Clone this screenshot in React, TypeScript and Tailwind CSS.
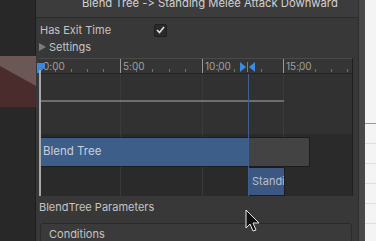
import React from "react";

const ticks = [56, 72, 88, 104, 137, 153, 170, 186, 219, 235, 262, 300, 316, 332, 348];

function Scene() {
  // little bit of scene view peeking out on the left
  return (
    <div className="w-[36px] h-full bg-[#282828] border-r border-[#1e1e1e] shrink-0">
      <svg width="36" height="241" viewBox="0 0 36 241">
        <rect x="0" y="56" width="36" height="51" fill="#4b2c2c" />
        <polygon points="0,56 36,56 36,86 0,66" fill="#6b5755" />
      </svg>
    </div>
  );
}

function Ruler() {
  return (
    <div className="relative h-[16px] bg-[#353535] border-t border-[#4a4a4a] border-b border-b-[#232323]">
      {ticks.map((t) => (
        <div key={t} className="absolute bottom-[1px] w-px h-[3px] bg-[#6f6f6f]" style={{ left: t - 40 }} />
      ))}
      <span className="absolute left-[4px] top-[1px] text-[10px] leading-[12px] text-[#a0a0a0]">0:00</span>
      {[
        { x: 81, l: "5:00" },
        { x: 163, l: "10:00" },
        { x: 244, l: "15:00" },
      ].map((m) => (
        <div key={m.l} className="absolute top-0 flex items-start" style={{ left: m.x }}>
          <div className="w-px h-[14px] bg-[#9a9a9a]" />
          <span className="ml-[2px] mt-[1px] text-[10px] leading-[12px] text-[#a0a0a0]">{m.l}</span>
        </div>
      ))}
      {/* transition in/out markers */}
      <svg className="absolute left-[201px] top-[3px]" width="15" height="10" viewBox="0 0 15 10">
        <polygon points="0,0 6,5 0,10" fill="#3c8be0" />
        <rect x="7" y="0" width="1" height="10" fill="#3c8be0" />
        <polygon points="15,0 9,5 15,10" fill="#3c8be0" />
      </svg>
      <svg className="absolute left-[-2px] top-[4px]" width="9" height="10" viewBox="0 0 9 10">
        <polygon points="0,0 8,0 8,4 2,10 0,10" fill="#3a86e0" />
      </svg>
    </div>
  );
}

function Timeline() {
  return (
    <div className="relative mt-[2px] w-[314px] border-r border-[#1f1f1f]">
      <Ruler />
      <div className="relative h-[122px]">
        <div className="h-[61px] bg-[#313131] border-b border-[#2a2a2a]" />
        <div className="h-[61px] bg-[#2a2a2a]" />
        {/* grid */}
        <div className="absolute top-0 bottom-0 left-[81px] w-px bg-[#3a3a3a]" />
        <div className="absolute top-0 bottom-0 left-[163px] w-px bg-[#3a3a3a]" />
        <div className="absolute top-0 bottom-0 left-[244px] w-px bg-[#3a3a3a]" />
        <div className="absolute top-[26px] left-0 w-[245px] h-[2px] bg-[#6e6e6e]" />
        {/* blend tree clip */}
        <div className="absolute top-[63px] left-0 w-[271px] h-[30px] flex border border-[#1c1c1c] border-l-0">
          <div className="w-[209px] h-full bg-[#3e5e8a] flex items-center pl-[4px] text-[11.5px] text-[#c9cfd8]">
            Blend Tree
          </div>
          <div className="flex-1 h-full bg-[#434343]" />
        </div>
        {/* standing clip */}
        <div className="absolute top-[93px] left-[209px] w-[37px] h-[29px] bg-[#3c5882] border border-[#1c1c1c] overflow-hidden flex items-center pl-[3px] text-[11px] text-[#b8bfca] whitespace-nowrap">
          Standi
        </div>
        <div className="absolute top-0 bottom-0 left-[209px] w-px bg-[#3f5f8c]" />
        {/* playhead */}
        <div className="absolute top-[-4px] bottom-0 left-0 w-[2px] bg-[#a8a8a8]" />
      </div>
    </div>
  );
}

function Cursor() {
  return (
    <svg className="absolute left-[245px] top-[209px]" width="18" height="25" viewBox="0 0 18 25">
      <path d="M1 1 L1 19 L5 15 L8 22 L11 21 L8 14 L14 14 Z" fill="#111" stroke="#e8e8e8" strokeWidth="1" />
    </svg>
  );
}

export default function App() {
  return (
    <div
      className="relative w-[376px] h-[241px] overflow-hidden flex bg-[#383838] text-[#c4c4c4] [font-feature-settings:'calt'_0,'liga'_0]"
      style={{ fontFamily: "Inter, 'Noto Sans', sans-serif" }}
    >
      <Scene />
      <div className="w-[322px] h-full bg-[#383838] shrink-0 overflow-hidden">
        <div className="h-[18px] bg-[#3c3c3c] border-b border-[#2b2b2b] pl-[46px] overflow-hidden">
          <div className="-mt-[5px] text-[11.25px] leading-[16px] text-[#d2d2d2] whitespace-nowrap">
            Blend Tree -&gt; Standing Melee Attack Downward
          </div>
        </div>
        <div className="pl-[3px] pt-[4px]">
          <div className="flex items-center h-[16px] text-[11px]">
            <span className="pl-[1px] w-[115px]">Has Exit Time</span>
            <div className="w-[13px] h-[13px] rounded-[2px] bg-[#2a2a2a] border border-[#1f1f1f] flex items-center justify-center">
              <svg width="9" height="8" viewBox="0 0 9 8">
                <path d="M1 4 L3.5 6.5 L8 1" fill="none" stroke="#e0e0e0" strokeWidth="1.6" />
              </svg>
            </div>
          </div>
          <div className="flex items-center h-[18px] text-[11px]">
            <svg className="mr-[3px]" width="7" height="8" viewBox="0 0 7 8">
              <polygon points="0,0 7,4 0,8" fill="#7c7c7c" />
            </svg>
            <span>Settings</span>
          </div>
          <Timeline />
          <div className="mt-[4px] h-[14px] text-[11px] leading-[14px]">BlendTree Parameters</div>
          <div className="mt-[9px] ml-[1px] w-[312px] h-[30px] rounded-t-[3px] border border-[#2a2a2a] bg-[#3a3a3a] pl-[8px] pt-[2px] text-[11px]">
            Conditions
          </div>
        </div>
      </div>
      <div className="w-[7px] h-full bg-[#474747] border-l border-[#2e2e2e] shrink-0" />
      <div className="flex-1 h-full bg-[#f4f4f4] flex flex-col">
        <div className="h-[124px] border-b border-[#9a9a9a]" />
        {[0, 1, 2, 3, 4].map((i) => (
          <div key={i} className="h-[20px] border-b border-[#dedede]" />
        ))}
      </div>
      <Cursor />
    </div>
  );
}
